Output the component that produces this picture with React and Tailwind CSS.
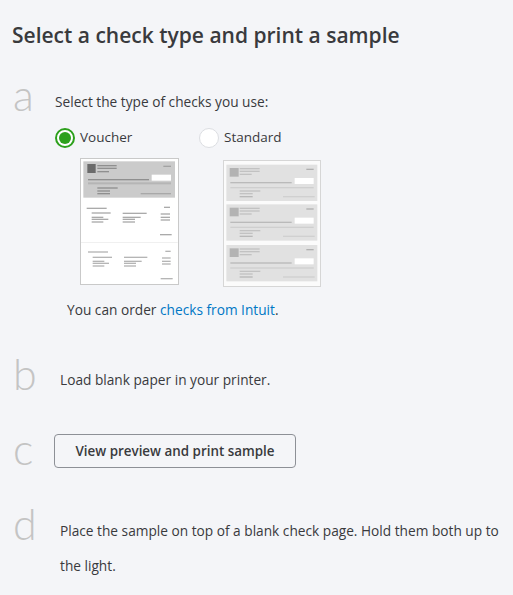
import React from "react";

const dark = "#8f8f8f";

function Bar({ x1, x2, y, h = 4, fill = dark }) {
  return <rect x={x1} y={y} width={x2 - x1} height={h} fill={fill} />;
}

function VoucherArt() {
  return (
    <svg width="99" height="127" viewBox="0 0 297 381">
      <rect x="1.5" y="1.5" width="294" height="378" fill="#fff" stroke="#c9c9c9" strokeWidth="3" />
      <rect x="10" y="10" width="275" height="109" fill="#cbcbcb" />
      <rect x="22" y="18" width="25" height="27" fill="#6b6b6b" />
      <Bar x1={52} x2={110} y={21} />
      <Bar x1={52} x2={110} y={29} />
      <Bar x1={52} x2={87} y={39} />
      <Bar x1={250} x2={273} y={23} fill="#a3a3a3" />
      <rect x="215" y="50" width="58" height="18" fill="#fff" />
      <Bar x1={24} x2={207} y={63} />
      <Bar x1={24} x2={273} y={73} h={6} fill="#b5b5b5" />
      <Bar x1={52} x2={113} y={88} />
      <Bar x1={52} x2={90} y={97} />
      <Bar x1={52} x2={90} y={105} />
      <Bar x1={182} x2={273} y={105} fill="#a8a8a8" />

      <Bar x1={20} x2={80} y={149} fill="#aaa" />
      <Bar x1={35} x2={92} y={163} fill="#aaa" />
      <Bar x1={35} x2={70} y={176} fill="#aaa" />
      <Bar x1={35} x2={85} y={182} fill="#aaa" />
      <Bar x1={35} x2={70} y={190} fill="#aaa" />
      <Bar x1={128} x2={200} y={164} fill="#aaa" />
      <Bar x1={128} x2={182} y={176} fill="#aaa" />
      <Bar x1={128} x2={165} y={182} fill="#aaa" />
      <Bar x1={128} x2={165} y={190} fill="#aaa" />
      <Bar x1={252} x2={270} y={146} fill="#aaa" />
      <Bar x1={242} x2={270} y={166} fill="#aaa" />
      <Bar x1={242} x2={270} y={176} fill="#aaa" />
      <Bar x1={242} x2={270} y={184} fill="#aaa" />
      <Bar x1={240} x2={275} y={228} fill="#aaa" />
      <Bar x1={3} x2={293} y={252} h={3} fill="#f0f0f0" />

      <Bar x1={24} x2={84} y={280} fill="#b5b5b5" />
      <Bar x1={38} x2={96} y={296} fill="#b5b5b5" />
      <Bar x1={38} x2={73} y={308} fill="#b5b5b5" />
      <Bar x1={38} x2={87} y={314} fill="#b5b5b5" />
      <Bar x1={38} x2={73} y={322} fill="#b5b5b5" />
      <Bar x1={132} x2={202} y={296} fill="#b5b5b5" />
      <Bar x1={132} x2={185} y={308} fill="#b5b5b5" />
      <Bar x1={132} x2={168} y={314} fill="#b5b5b5" />
      <Bar x1={132} x2={168} y={322} fill="#b5b5b5" />
      <Bar x1={256} x2={272} y={278} fill="#b5b5b5" />
      <Bar x1={246} x2={272} y={298} fill="#b5b5b5" />
      <Bar x1={246} x2={272} y={308} fill="#b5b5b5" />
      <Bar x1={246} x2={272} y={316} fill="#b5b5b5" />
      <Bar x1={242} x2={278} y={360} fill="#b5b5b5" />
    </svg>
  );
}

function StubPanel({ y }) {
  const c = "#c2c2c2";
  return (
    <g transform={`translate(10 ${y})`}>
      <rect width="273" height="109" fill="#e1e1e1" />
      <rect x="10" y="10" width="27" height="26" fill="#b3b3b3" />
      <Bar x1={40} x2={100} y={10} fill={c} />
      <Bar x1={40} x2={100} y={18} fill={c} />
      <Bar x1={40} x2={76} y={27} fill={c} />
      <Bar x1={240} x2={262} y={12} fill="#b0b0b0" />
      <rect x="205" y="40" width="57" height="18" fill="#fff" />
      <Bar x1={12} x2={196} y={52} fill="#bababa" />
      <Bar x1={12} x2={262} y={67} fill="#cfcfcf" />
      <Bar x1={40} x2={102} y={77} fill={c} />
      <Bar x1={40} x2={79} y={85} fill={c} />
      <Bar x1={40} x2={79} y={94} fill="#b8b8b8" />
      <Bar x1={170} x2={265} y={94} fill="#d0d0d0" />
    </g>
  );
}

function StandardArt() {
  return (
    <svg width="98" height="127" viewBox="0 0 294 381">
      <rect x="1.5" y="1.5" width="291" height="378" fill="#fbfbfb" stroke="#d6d6d6" strokeWidth="3" />
      <StubPanel y={14} />
      <StubPanel y={133} />
      <StubPanel y={255} />
    </svg>
  );
}

function Letter({ children }) {
  return (
    <span className="w-[46px] shrink-0 pl-[13px] font-['Lato',sans-serif] text-[43px] font-light leading-[43px] text-[#c4c4c4]">
      {children}
    </span>
  );
}

export default function App() {
  return (
    <div className="min-h-screen bg-[#f4f5f8] font-['Open_Sans',sans-serif] text-[#393a3d]">
      <h1 className="pl-3 pt-[21px] text-[21px] font-semibold leading-[28px] text-[#393a3d]">
        Select a check type and print a sample
      </h1>

      <div className="mt-[24px] flex">
        <Letter>a</Letter>
        <div className="pt-[19px] pl-[9px]">
          <p className="text-[13.7px] leading-[20px]">Select the type of checks you use:</p>
          <div className="mt-[15px] flex">
            <div className="w-[144px]">
              <label className="flex h-[21px] items-center gap-[5px]">
                <span className="flex h-5 w-5 items-center justify-center rounded-full border-2 border-[#2ca01c] bg-white">
                  <span className="h-[12px] w-[12px] rounded-full bg-[#2ca01c]" />
                </span>
                <span className="text-[13.5px] font-medium">Voucher</span>
              </label>
              <div className="mt-[10px] pl-[25px]">
                <VoucherArt />
              </div>
            </div>
            <div>
              <label className="flex h-[21px] items-center gap-[5px]">
                <span className="h-5 w-5 rounded-full border border-[#dcdee2] bg-white" />
                <span className="text-[13.5px] font-medium">Standard</span>
              </label>
              <div className="mt-[12px] pl-[24px]">
                <StandardArt />
              </div>
            </div>
          </div>
          <p className="mt-[13px] pl-[12px] text-[13.7px] leading-[20px]">
            You can order <a className="text-[#0077c5]">checks from Intuit</a>.
          </p>
        </div>
      </div>

      <div className="mt-[32px] flex">
        <Letter>b</Letter>
        <p className="pt-[18px] pl-[14px] text-[13.7px] leading-[20px]">Load blank paper in your printer.</p>
      </div>

      <div className="mt-[32px] flex">
        <Letter>c</Letter>
        <div className="pt-[7px] pl-[8px]">
          <button className="h-[34px] w-[242px] rounded-[4px] border border-[#8d9096] text-[13.4px] font-semibold text-[#393a3d]">
            View preview and print sample
          </button>
        </div>
      </div>

      <div className="mt-[32px] flex">
        <Letter>d</Letter>
        <p className="pt-[11px] pl-[14px] pr-2 text-[13.7px] leading-[35px]">
          Place the sample on top of a blank check page. Hold them both up to the light.
        </p>
      </div>
    </div>
  );
}
